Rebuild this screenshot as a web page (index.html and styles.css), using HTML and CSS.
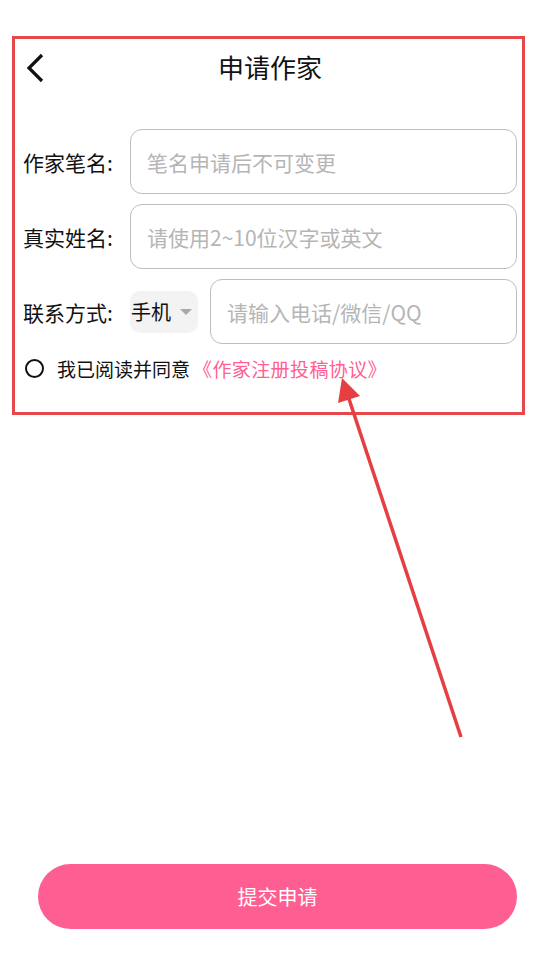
FILE: index.html
```html
<!DOCTYPE html>
<html>
	<head>
		<meta charset="utf-8">
		<title>申请作家</title>
		<link rel="stylesheet" href="styles.css">
	</head>
	<body>
		<div class="page">
			<div class="apply-frame">
				<div class="apply-header">
					<span class="back-icon">
						<svg width="20" height="30" viewBox="0 0 20 30"><polyline points="16,2 3,15 16,28" fill="none" stroke="#111" stroke-width="3.2"/></svg>
					</span>
					<h1>申请作家</h1>
				</div>

				<form class="apply-form">
					<div class="form-row">
						<span class="form-label">作家笔名:</span>
						<input class="form-input" type="text" placeholder="笔名申请后不可变更"/>
					</div>
					<div class="form-row">
						<span class="form-label">真实姓名:</span>
						<input class="form-input" type="text" placeholder="请使用2~10位汉字或英文"/>
					</div>
					<div class="form-row">
						<span class="form-label">联系方式:</span>
						<span class="contact-select">手机<span class="select-caret"></span></span>
						<input class="form-input" type="text" placeholder="请输入电话/微信/QQ"/>
					</div>
					<div class="agree-row">
						<span class="agree-check"></span>
						<span class="agree-text">我已阅读并同意</span>
						<span class="agree-link">《作家注册投稿协议》</span>
					</div>
				</form>
			</div>

			<button class="submit-button">提交申请</button>
		</div>

		<svg class="note-arrow" width="540" height="960" viewBox="0 0 540 960">
			<line x1="461" y1="737" x2="348" y2="396" stroke="#e53f42" stroke-width="3.5"/>
			<polygon points="342,378 338,403 360,396" fill="#e53f42"/>
		</svg>
	</body>
</html>
```

FILE: styles.css
```css
html, body {
    margin: 0;
    padding: 0;
    background-color: #fff;
}

body {
    font-family: "Noto Sans CJK SC", "Noto Sans", sans-serif;
    color: #111;
}

div.page {
    display: flex;
    flex-direction: column;
    height: 960px;
}

div.apply-frame {
    margin: 36px 0 0 12px;
    width: 513px;
    box-sizing: border-box;
    border: 3px solid #e5474a;
    padding: 0 5px 0 8px;
}

div.apply-header {
    display: flex;
    align-items: center;
    height: 56px;
    position: relative;
}

span.back-icon {
    display: flex;
    margin-left: 3px;
    padding-top: 2px;
}

div.apply-header h1 {
    position: absolute;
    left: 0;
    right: 0;
    margin: 0;
    text-align: center;
    font-size: 26px;
    font-weight: normal;
    line-height: 56px;
    pointer-events: none;
}

form.apply-form {
    margin: 34px 0 0 0;
    display: flex;
    flex-direction: column;
    gap: 10px;
}

div.form-row {
    display: flex;
    align-items: center;
    height: 65px;
}

span.form-label {
    width: 107px;
    flex: none;
    font-size: 21px;
}

input.form-input {
    flex: 1;
    min-width: 0;
    height: 65px;
    box-sizing: border-box;
    border: 1px solid #bdbdbd;
    border-radius: 12px;
    padding: 0 16px;
    font-family: inherit;
    font-size: 21px;
    color: #111;
    outline: none;
}

input.form-input::placeholder {
    color: #b5b5b5;
}

span.contact-select {
    display: flex;
    align-items: center;
    width: 68px;
    height: 42px;
    box-sizing: border-box;
    padding-left: 1px;
    margin-right: 12px;
    background-color: #f3f3f3;
    border-radius: 10px;
    font-size: 20px;
    flex: none;
}

span.select-caret {
    margin-left: 9px;
    width: 0;
    height: 0;
    border-left: 6px solid transparent;
    border-right: 6px solid transparent;
    border-top: 6px solid #a8a8a8;
}

div.agree-row {
    display: flex;
    align-items: center;
    height: 28px;
    margin: 0 0 30px 2px;
}

span.agree-check {
    width: 15px;
    height: 15px;
    border: 2px solid #111;
    border-radius: 50%;
    margin-right: 13px;
}

span.agree-text {
    font-size: 19px;
}

span.agree-link {
    margin-left: 3px;
    font-size: 19px;
    letter-spacing: 0.4px;
    color: #ff5f92;
}

button.submit-button {
    margin: auto 0 31px 38px;
    width: 479px;
    height: 65px;
    border: none;
    border-radius: 33px;
    background-color: #ff5e93;
    color: #fff;
    font-family: inherit;
    font-size: 20px;
}

svg.note-arrow {
    position: absolute;
    left: 0;
    top: 0;
    pointer-events: none;
}
```
